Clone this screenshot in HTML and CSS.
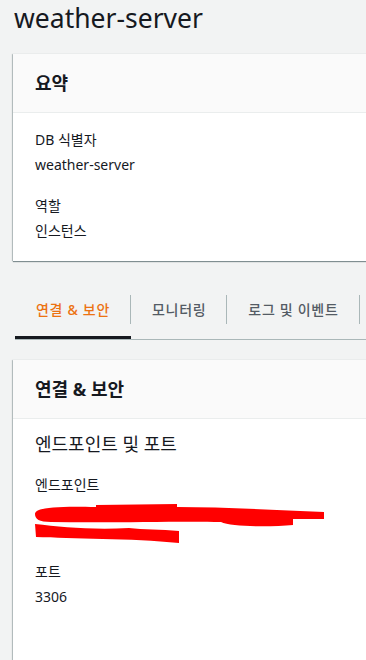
FILE: index.html
```html
<!DOCTYPE html>
<html lang="ko">
  <head>
    <title>weather-server</title>
    <meta charset="utf-8">
    <link rel="stylesheet" href="styles.css">
  </head>
  <body>
    <div class="page">
      <h1 class="page-title">weather-server</h1>

      <div class="card">
        <div class="card-header">요약</div>
        <div class="card-body">
          <div class="field">
            <div class="field-label">DB 식별자</div>
            <div class="field-value">weather-server</div>
          </div>
          <div class="field">
            <div class="field-label">역할</div>
            <div class="field-value">인스턴스</div>
          </div>
        </div>
      </div>

      <div class="tabs">
        <div class="tab active"><span class="tab-label">연결 &amp; 보안</span></div>
        <div class="tab"><span class="tab-label">모니터링</span></div>
        <div class="tab"><span class="tab-label">로그 및 이벤트</span></div>
      </div>

      <div class="card card-open">
        <div class="card-header">연결 &amp; 보안</div>
        <div class="card-body">
          <div class="section-title">엔드포인트 및 포트</div>
          <div class="field">
            <div class="field-label">엔드포인트</div>
            <svg class="redact" width="300" height="44" viewBox="0 0 300 44">
              <path d="M4 13 C4 6 30 5 65 6 L65 4 L146 3 L146 6 C190 6 240 9 293 11 L293 18 L262 18 L262 24 C240 26 200 26 190 21 C150 20 80 22 20 21 C8 21 4 18 4 13 Z" fill="#ff0000"/>
              <path d="M4 23 L5 36 C40 38 100 37 148 42 L148 30 C130 28 112 29 98 27 C60 29 30 26 4 23 Z" fill="#ff0000"/>
            </svg>
          </div>
          <div class="field">
            <div class="field-label">포트</div>
            <div class="field-value">3306</div>
          </div>
        </div>
      </div>
    </div>
  </body>
</html>
```

FILE: styles.css
```css
html, body {
  margin: 0;
  padding: 0;
  overflow: hidden;
}
body {
  background: #f2f3f3;
  color: #16191f;
  font-family: "Noto Sans", "Noto Sans CJK KR", sans-serif;
  font-size: 14px;
  line-height: 22px;
  height: 660px;
}

.page {
  width: 420px;
  padding-left: 13px;
}

.page-title {
  margin: 0;
  padding-left: 1px;
  font-size: 26.5px;
  font-weight: normal;
  line-height: 36px;
}

.card {
  margin-top: 18px;
  background: #ffffff;
  box-shadow: 0 1px 1px 0 rgba(0,28,36,0.45), -1px 0 1px 0 rgba(0,28,36,0.2);
}

.card-header {
  background: #fafafa;
  border-bottom: 1px solid #eaeded;
  padding: 19px 22px 19px;
  font-size: 18px;
  font-weight: bold;
  line-height: 20px;
}

.card-body {
  padding: 16px 22px 19px;
  display: flex;
  flex-direction: column;
  gap: 19px;
}

.field-value {
  margin-top: 3px;
}

.tabs {
  margin-top: 27px;
  display: flex;
  border-bottom: 1px solid #aab7b8;
  margin-left: 2px;
}

.tab {
  padding: 7px 0 12px;
  border-bottom: 3px solid transparent;
  color: #545b64;
  font-size: 14px;
  font-weight: 500;
  letter-spacing: 0.7px;
}

.tab.active {
  color: #ec7211;
  border-bottom-color: #16191f;
}

.tab-label {
  display: block;
  padding: 4px 20px 3px 21px;
  line-height: 22px;
  border-right: 1px solid #aab7b8;
}

.card-open {
  margin-top: 20px;
  height: 400px;
}

.card-open .card-body {
  padding-top: 13px;
  gap: 0;
}

.section-title {
  font-size: 18px;
  line-height: 24px;
  margin-bottom: 18px;
}

.redact {
  display: block;
  margin: 5px 0 0 -4px;
}

.card-open .field + .field {
  margin-top: 16px;
}
```
